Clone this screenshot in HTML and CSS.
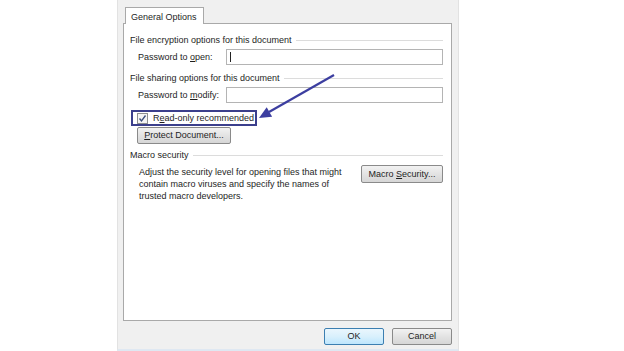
FILE: index.html
```html
<!DOCTYPE html>
<html lang="en">
<head>
    <meta charset="UTF-8">
    <title>General Options</title>
    <link rel="stylesheet" href="styles.css">
</head>
<body>
    <div class="dialog">
        <div class="tabs">
            <div class="tab">General Options</div>
        </div>

        <div class="panel">
            <!-- encryption -->
            <div class="section">
                <span>File encryption options for this document</span>
            </div>
            <div class="field-row">
                <label>Password to <u>o</u>pen:</label>
                <div class="input"><span class="caret"></span></div>
            </div>

            <!-- sharing -->
            <div class="section">
                <span>File sharing options for this document</span>
            </div>
            <div class="field-row">
                <label>Password to <u>m</u>odify:</label>
                <div class="input"></div>
            </div>

            <div class="check-row">
                <span class="checkbox">
                    <svg width="9" height="9" viewBox="0 0 9 9"><path d="M1.5 4.5 L3.5 7 L7.5 1.5" fill="none" stroke="#3b4d7a" stroke-width="1.3"/></svg>
                </span>
                <span>R<u>e</u>ad-only recommended</span>
            </div>
            <div class="btn protect"><u>P</u>rotect Document...</div>

            <!-- macro -->
            <div class="section">
                <span>Macro security</span>
            </div>
            <div class="macro-row">
                <p>Adjust the security level for opening files that might contain macro viruses and specify the names of trusted macro developers.</p>
                <div class="btn macro">Macro <u>S</u>ecurity...</div>
            </div>

            <!-- callout arrow -->
            <svg class="arrow" width="80" height="50" viewBox="0 0 80 50">
                <path d="M77 3 L12 40" stroke="#3c3ea0" stroke-width="2.2" fill="none"/>
                <path d="M2 46 L9.7 35.3 L15.1 44.8 Z" fill="#3c3ea0"/>
            </svg>
        </div>

        <div class="footer">
            <div class="btn ok">OK</div>
            <div class="btn">Cancel</div>
        </div>
    </div>
</body>
</html>
```

FILE: styles.css
```css
body {
    margin: 0;
    background: #fff;
    font-family: 'Liberation Sans', Arial, sans-serif;
    font-size: 9px;
    color: #1e1e1e;
}

.dialog {
    width: 342px;
    height: 351px;
    margin-left: 117px;
    box-sizing: border-box;
    padding: 7px 6px 0 5px;
    background: #f0f0f0;
    border-left: 1px solid #e2e2e2;
    border-right: 1px solid #e2e2e2;
    border-bottom: 2px solid #dfe8f2;
    white-space: nowrap;
}

.tabs {
    display: flex;
    height: 16px;
}

.tab {
    margin-left: 2px;
    width: 79px;
    height: 17px;
    box-sizing: border-box;
    padding: 4px 0 0 5px;
    background: #fff;
    border: 1px solid #a9a9a9;
    border-bottom: none;
    position: relative;
    z-index: 1;
}

.panel {
    position: relative;
    height: 298px;
    box-sizing: border-box;
    background: #fff;
    border: 1px solid #a9a9a9;
    padding: 10px 8px 0 6px;
}

.section {
    display: flex;
    align-items: center;
    gap: 4px;
    height: 12px;
}

.section::after {
    content: "";
    flex: 1;
    border-top: 1px solid #dcdcdc;
}

.field-row {
    display: flex;
    align-items: center;
    height: 16px;
    margin: 3px 0 7px 8px;
}

.field-row label {
    width: 88px;
}

.input {
    flex: 1;
    height: 16px;
    box-sizing: border-box;
    border: 1px solid #b4b4b4;
    position: relative;
}

.caret {
    position: absolute;
    left: 3px;
    top: 2px;
    width: 1px;
    height: 10px;
    background: #222;
}

.check-row {
    display: inline-flex;
    align-items: center;
    gap: 5px;
    margin: 0 0 0 1px;
    width: 126px;
    height: 16px;
    padding: 0 0 0 4px;
    border: 2px solid #3b3f8c;
    box-sizing: border-box;
}

.checkbox {
    width: 9px;
    height: 9px;
    border: 1px solid #8e8f8f;
    background: #f4f4f4;
    display: flex;
}

.btn {
    text-align: center;
    height: 17px;
    line-height: 15px;
    box-sizing: border-box;
    border: 1px solid #8a8a8a;
    border-radius: 2px;
    background: linear-gradient(#f2f2f2, #e3e3e3 50%, #d6d6d6);
}

.protect {
    width: 94px;
    margin: 1px 0 5px 7px;
}

.macro-row {
    display: flex;
    justify-content: space-between;
    align-items: flex-start;
    margin: 1px 0 0 9px;
}

.macro-row p {
    margin: 4px 0 0;
    width: 215px;
    line-height: 12px;
    white-space: normal;
}

.macro {
    width: 82px;
    height: 18px;
    line-height: 16px;
    margin-top: 3px;
}

.arrow {
    position: absolute;
    left: 133px;
    top: 48px;
}

.footer {
    display: flex;
    justify-content: flex-end;
    gap: 8px;
    padding: 7px 0 0;
}

.footer .btn {
    width: 60px;
    height: 17px;
}

.footer .ok {
    border-color: #3c7fb1;
    background: linear-gradient(#eaf6fd, #d9f0fc 50%, #bee6fd);
}
```
